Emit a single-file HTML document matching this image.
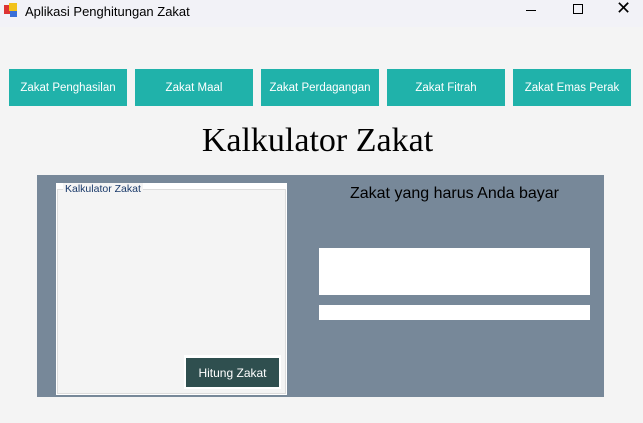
<html><head><style>
body{margin:0;width:643px;height:423px;background:#f4f4f4;font-family:"Liberation Sans",sans-serif;position:relative;overflow:hidden}
.a{position:absolute}
.tb{left:0;top:0;width:643px;height:27px;background:#f2f2f7;font-size:13px}
.btn{top:69px;width:118px;height:37px;background:#20b2aa;color:#fff;font-size:11.5px;display:flex;align-items:center;justify-content:center}
</style></head><body>
<div class="a tb">
<div class="a" style="left:4px;top:5px;width:7px;height:9px;background:#d33"></div>
<div class="a" style="left:9px;top:3px;width:8px;height:8px;background:#f2c21b"></div>
<div class="a" style="left:10px;top:11px;width:7px;height:6px;background:#3a6fd8"></div>
<div class="a" style="left:25px;top:4px;color:#000">Aplikasi Penghitungan Zakat</div>
<div class="a" style="left:526px;top:10px;width:10px;height:1px;background:#000"></div>
<div class="a" style="left:573px;top:4px;width:8px;height:8px;border:1px solid #000"></div>
<div class="a" style="left:616px;top:-2px;font-size:18px">✕</div>
</div>
<div class="a btn" style="left:9px">Zakat Penghasilan</div>
<div class="a btn" style="left:135px">Zakat Maal</div>
<div class="a btn" style="left:261px">Zakat Perdagangan</div>
<div class="a btn" style="left:387px">Zakat Fitrah</div>
<div class="a btn" style="left:513px">Zakat Emas Perak</div>
<div class="a" style="left:-4px;width:643px;top:122px;text-align:center;font-family:'Liberation Serif',serif;font-size:34px">Kalkulator Zakat</div>
<div class="a" style="left:37px;top:175px;width:567px;height:222px;background:#778899"></div>
<div class="a" style="left:56px;top:183px;width:231px;height:212px;background:#fff"></div>
<div class="a" style="left:57px;top:189px;width:227px;height:203px;background:#f4f4f4;border:1px solid #dcdcdc"></div>
<div class="a" style="left:63px;top:183px;background:#f4f4f4;padding:0 2px;font-size:10.5px;color:#1a3a6a">Kalkulator Zakat</div>
<div class="a" style="left:184px;top:355px;width:97px;height:34px;background:#fff"></div>
<div class="a" style="left:186px;top:358px;width:93px;height:29px;background:#2f4f4f;color:#fff;font-size:12px;display:flex;align-items:center;justify-content:center">Hitung Zakat</div>
<div class="a" style="left:319px;top:185px;width:271px;text-align:center;font-size:16px;color:#000">Zakat yang harus Anda bayar</div>
<div class="a" style="left:319px;top:248px;width:271px;height:47px;background:#fff"></div>
<div class="a" style="left:319px;top:305px;width:271px;height:15px;background:#fff"></div>
</body></html>
